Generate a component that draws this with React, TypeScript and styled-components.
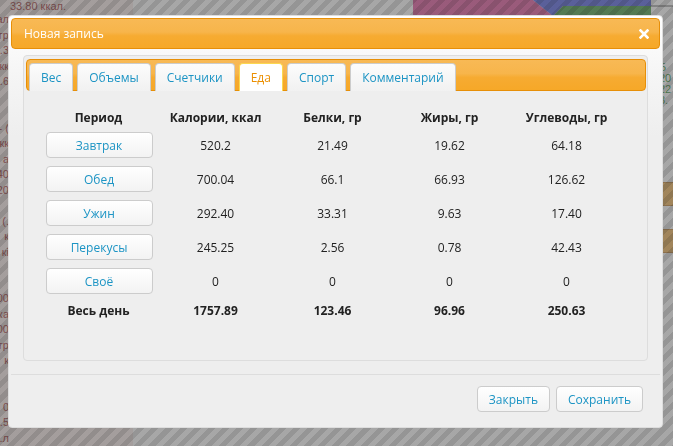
import React from 'react';
import styled, { createGlobalStyle, css } from 'styled-components';

const GlobalStyle = createGlobalStyle`
  *, *::before, *::after {
    box-sizing: border-box;
  }
  html, body {
    margin: 0;
    padding: 0;
  }
  body {
    width: 673px;
    height: 446px;
    overflow: hidden;
    font-family: "Open Sans", "Noto Sans", sans-serif;
    font-size: 12px;
  }
`;

interface Row {
  period: string;
  kcal: string;
  protein: string;
  fat: string;
  carbs: string;
}

const rows: Row[] = [
  { period: 'Завтрак', kcal: '520.2', protein: '21.49', fat: '19.62', carbs: '64.18' },
  { period: 'Обед', kcal: '700.04', protein: '66.1', fat: '66.93', carbs: '126.62' },
  { period: 'Ужин', kcal: '292.40', protein: '33.31', fat: '9.63', carbs: '17.40' },
  { period: 'Перекусы', kcal: '245.25', protein: '2.56', fat: '0.78', carbs: '42.43' },
  { period: 'Своё', kcal: '0', protein: '0', fat: '0', carbs: '0' },
];

const tabs = ['Вес', 'Объемы', 'Счетчики', 'Еда', 'Спорт', 'Комментарий'];

// fragments of the page behind the modal, only their right ends peek out
const leftLines = [
  'ал', 'гр', '3.', 'кк', '3.6', '', '', ') -', 'кк', 'а', '40', '20', '', '.)',
  'к', 'кі', '', '', '00', 'ка', '00', 'гр.', 'к', '', '', '0', '0.5', 'л.',
];

export default function App() {
  return (
    <>
      <GlobalStyle />
      <Page>
        <BackText>
          <BackHead>33.80 ккал.</BackHead>
          {leftLines.map((l, i) => (
            <BackLine key={i}>{l || '\u00a0'}</BackLine>
          ))}
        </BackText>
        <BackMain>
          <ChartStrip>
            <svg width="260" height="16" viewBox="0 0 260 16">
              <path d="M0 0 H120 L140 16 H0 Z" fill="#e0509a" />
              <path d="M120 0 H238 V6 H150 L140 16 Z" fill="#4d5ce0" />
              <path d="M150 6 H238 V16 H140 Z" fill="#3f9a3f" />
              <line x1="238" y1="6" x2="260" y2="6" stroke="#555" strokeWidth="1" />
            </svg>
          </ChartStrip>
          <SideInfo>
            <GreenText>Б</GreenText>
            <GreenText>20</GreenText>
            <GreenText>22</GreenText>
            <GreenText>3.</GreenText>
            <SideBar $top={76} />
            <SideBar $top={23} />
          </SideInfo>
        </BackMain>
      </Page>
      <Overlay />
      <Dialog>
        <TitleBar>
          <Title>Новая запись</Title>
          <CloseIcon aria-label="close">
            <svg width="10" height="10" viewBox="0 0 10 10">
              <path d="M1.5 1.5 L8.5 8.5 M8.5 1.5 L1.5 8.5" stroke="#fff" strokeWidth="2.6" strokeLinecap="square" />
            </svg>
          </CloseIcon>
        </TitleBar>
        <DialogBody>
          <Tabs>
            <TabNav>
              {tabs.map((t) => (
                <Tab key={t} $active={t === 'Еда'}>
                  {t}
                </Tab>
              ))}
            </TabNav>
            <Panel>
              <Table>
                <thead>
                  <tr>
                    <Th>Период</Th>
                    <Th>Калории, ккал</Th>
                    <Th>Белки, гр</Th>
                    <Th>Жиры, гр</Th>
                    <Th>Углеводы, гр</Th>
                  </tr>
                </thead>
                <tbody>
                  {rows.map((r) => (
                    <tr key={r.period}>
                      <Td>
                        <PeriodButton>{r.period}</PeriodButton>
                      </Td>
                      <Td>{r.kcal}</Td>
                      <Td>{r.protein}</Td>
                      <Td>{r.fat}</Td>
                      <Td>{r.carbs}</Td>
                    </tr>
                  ))}
                  <tr>
                    <TotalTd>Весь день</TotalTd>
                    <TotalTd>1757.89</TotalTd>
                    <TotalTd>123.46</TotalTd>
                    <TotalTd>96.96</TotalTd>
                    <TotalTd>250.63</TotalTd>
                  </tr>
                </tbody>
              </Table>
            </Panel>
          </Tabs>
        </DialogBody>
        <ButtonPane>
          <PaneButton>Закрыть</PaneButton>
          <PaneButton>Сохранить</PaneButton>
        </ButtonPane>
      </Dialog>
    </>
  );
}

const orangeGloss = css`
  background: linear-gradient(to bottom, #f8b955 0%, #f7b54b 45%, #f6ab32 58%, #f6a828 100%);
`;

const Page = styled.div`
  display: flex;
  width: 673px;
  height: 446px;
  background: #fff;
  font-family: "Liberation Sans", sans-serif;
`;

const BackText = styled.div`
  width: 140px;
  background: #f8ebe8;
  display: flex;
  flex-direction: column;
`;

const BackHead = styled.div`
  height: 12px;
  line-height: 12px;
  padding-left: 10px;
  font-size: 11px;
  color: #9b3030;
  white-space: nowrap;
`;

const BackLine = styled.div`
  width: 9px;
  height: 15.5px;
  line-height: 15.5px;
  font-size: 11px;
  color: #9b3030;
  white-space: nowrap;
  direction: rtl;
  overflow: hidden;
`;

const BackMain = styled.div`
  flex: 1;
  display: flex;
  flex-direction: column;
`;

const ChartStrip = styled.div`
  height: 16px;
  padding-left: 280px;
  overflow: hidden;
`;

const SideInfo = styled.div`
  padding: 46px 0 0 523px;
  display: flex;
  flex-direction: column;
`;

const GreenText = styled.div`
  font-size: 11px;
  line-height: 11px;
  color: #2e8b2e;
  padding-left: 3px;
`;

const SideBar = styled.div<{ $top: number }>`
  height: 24px;
  margin-top: ${({ $top }) => $top}px;
  background: #f0b050;
  border-top: 1px solid #c08030;
  border-bottom: 1px solid #c08030;
`;

const Overlay = styled.div`
  position: fixed;
  inset: 0;
  background: repeating-linear-gradient(
    135deg,
    rgba(84, 84, 84, 0.62) 0 5px,
    rgba(100, 100, 100, 0.57) 5px 10px
  );
`;

const Dialog = styled.div`
  position: fixed;
  left: 8px;
  top: 15px;
  width: 655px;
  height: 413px;
  padding: 2px;
  border: 1px solid #dddddd;
  border-radius: 4px;
  background: linear-gradient(to bottom, #ffffff 0, #f5f5f5 60px, #eeeeee 120px);
  display: flex;
  flex-direction: column;
  font-family: "Open Sans", "Noto Sans", sans-serif;
  color: #333;
`;

const TitleBar = styled.div`
  height: 31px;
  border: 1px solid #e78f08;
  border-radius: 4px;
  ${orangeGloss};
  display: flex;
  align-items: center;
  justify-content: space-between;
  padding: 0 9px 0 12px;
`;

const Title = styled.span`
  color: #fff;
  font-size: 12px;
  font-weight: 500;
`;

const CloseIcon = styled.span`
  display: flex;
  width: 12px;
  height: 12px;
  align-items: center;
  justify-content: center;
`;

const DialogBody = styled.div`
  flex: 1;
  padding: 6px 12px 13px 12px;
  display: flex;
`;

const Tabs = styled.div`
  flex: 1;
  border: 1px solid #dddddd;
  border-radius: 4px;
  padding: 3px 1px 3px 2px;
  background: #eeeeee;
  display: flex;
  flex-direction: column;
`;

const TabNav = styled.div`
  height: 32px;
  border: 1px solid #e78f08;
  border-radius: 4px;
  padding: 3px 2px 0 2px;
  ${orangeGloss};
  display: flex;
  gap: 4px;
  align-items: flex-end;
`;

const Tab = styled.div<{ $active: boolean }>`
  height: 28px;
  margin-bottom: -1px;
  padding: 0 11px;
  border: 1px solid #cccccc;
  border-bottom: none;
  border-radius: 4px 4px 0 0;
  background: linear-gradient(to bottom, #fcfcfc, #f1f1f1);
  color: #1c94c4;
  font-size: 12px;
  font-weight: 500;
  display: flex;
  align-items: center;
  ${({ $active }) =>
    $active &&
    css`
      border-color: #fbd850;
      background: #ffffff;
      color: #eb8f00;
    `}
`;

const Panel = styled.div`
  flex: 1;
  padding: 15px 20px 0 14px;
`;

const Table = styled.table`
  width: 585px;
  border-collapse: collapse;
  table-layout: fixed;
`;

const Th = styled.th`
  height: 22px;
  padding: 0;
  font-size: 12px;
  font-weight: 700;
  color: #222;
  text-align: center;
`;

const Td = styled.td`
  height: 34px;
  padding: 0;
  font-size: 12px;
  font-weight: 500;
  color: #222;
  text-align: center;
`;

const TotalTd = styled(Td)`
  height: 24px;
  font-weight: 700;
`;

const PeriodButton = styled.button`
  width: 107px;
  height: 26px;
  border: 1px solid #cccccc;
  border-radius: 4px;
  background: linear-gradient(to bottom, #ffffff, #f3f3f3);
  color: #1c94c4;
  font-family: inherit;
  font-size: 12px;
  font-weight: 500;
  padding: 0;
  margin-left: 1px;
`;

const ButtonPane = styled.div`
  height: 51px;
  border-top: 1px solid #dddddd;
  display: flex;
  justify-content: flex-end;
  align-items: flex-start;
  gap: 6px;
  padding: 11px 17px 0 0;
`;

const PaneButton = styled.button`
  height: 26px;
  padding: 0 11px;
  border: 1px solid #cccccc;
  border-radius: 4px;
  background: linear-gradient(to bottom, #ffffff, #f3f3f3);
  color: #1c94c4;
  font-family: inherit;
  font-size: 12px;
  font-weight: 500;
`;
